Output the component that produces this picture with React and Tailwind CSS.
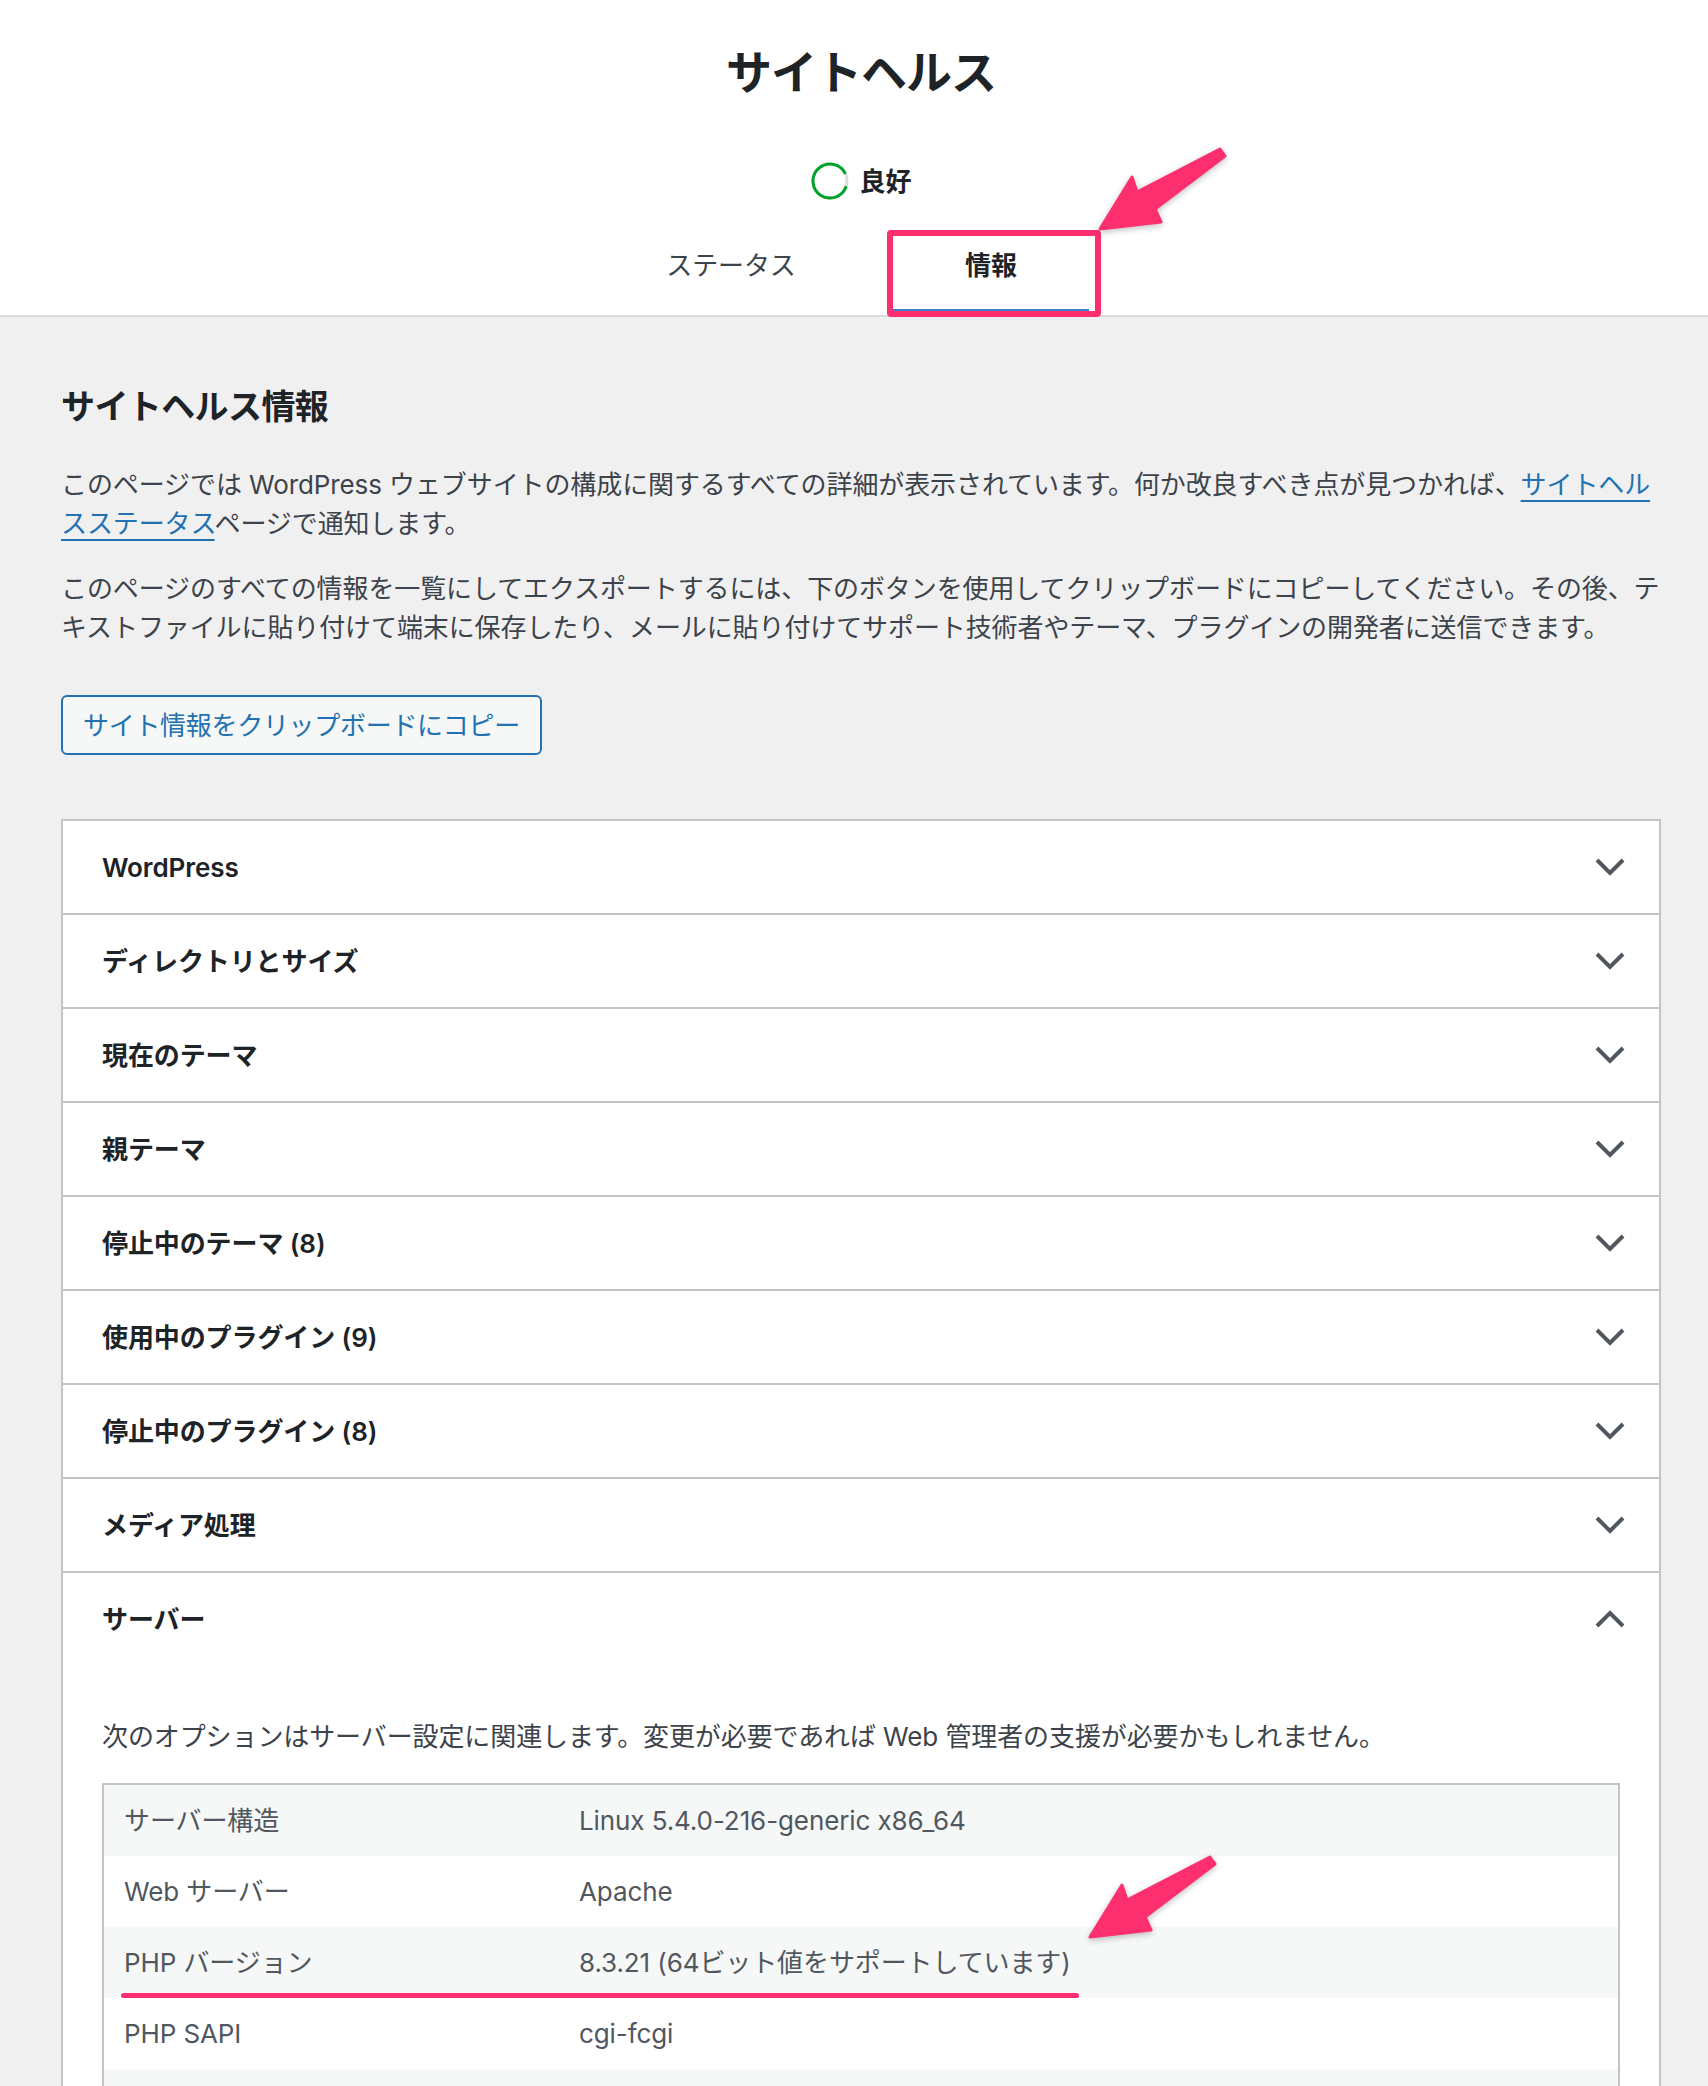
const sections = [
  'WordPress',
  'ディレクトリとサイズ',
  '現在のテーマ',
  '親テーマ',
  '停止中のテーマ (8)',
  '使用中のプラグイン (9)',
  '停止中のプラグイン (8)',
  'メディア処理',
];

// last row only shows its stripe at the bottom edge of the screenshot
const serverInfo = [
  ['サーバー構造', 'Linux 5.4.0-216-generic x86_64'],
  ['Web サーバー', 'Apache'],
  ['PHP バージョン', '8.3.21 (64ビット値をサポートしています)'],
  ['PHP SAPI', 'cgi-fcgi'],
  ['', ''],
];

// chevron drawn like the WP accordion icon (two borders of a rotated square)
const Chevron = ({ up }) => (
  <svg width="30" height="18" viewBox="0 0 30 18" className="shrink-0">
    <polyline
      points={up ? '2,16 15,3 28,16' : '2,2 15,15 28,2'}
      fill="none"
      stroke="#50575e"
      strokeWidth="4"
      strokeLinejoin="miter"
    />
  </svg>
);

const ProgressRing = () => (
  <svg width="38" height="38" viewBox="0 0 38 38">
    <circle cx="19" cy="19" r="17" fill="none" stroke="#dcdcde" strokeWidth="3" />
    <path d="M 35.17 24.25 A 17 17 0 1 1 34.41 11.82" fill="none" stroke="#00a32a" strokeWidth="3" />
  </svg>
);

// pink annotation arrow, tip at (10, 89) of the box
const PinkArrow = ({ className }) => (
  <svg
    width="145"
    height="100"
    viewBox="0 0 145 100"
    className={`absolute drop-shadow-[0_2px_3px_rgba(0,0,0,0.25)] ${className}`}
  >
    <polygon
      points="10,89 42,37 47,52 130,9 135,16 65,69 71,82"
      fill="#fe2f6e"
      stroke="#fe2f6e"
      strokeWidth="3"
      strokeLinejoin="round"
    />
  </svg>
);

export default function App() {
  return (
    <div className="relative h-[2086px] w-[1708px] overflow-hidden bg-[#f0f0f1] font-[Inter,'Noto_Sans_CJK_JP',sans-serif] text-[26px] leading-[39px] tracking-[-0.1px] text-[#3c434a]">
      <div className="w-[1722px]">
        {/* Header */}
        <header className="flex flex-col items-center border-b-2 border-[#dcdcde] bg-white pt-[42px]">
          <h1 className="h-[60px] text-[46px] leading-[60px] font-semibold tracking-[-1px] text-[#1d2327]">サイトヘルス</h1>
          <div className="mt-[59px] flex h-[40px] items-center gap-[11px]">
            <ProgressRing />
            <span className="font-semibold text-[#1d2327]">良好</span>
          </div>
          <nav className="mt-[29px] flex gap-[64px]">
            <div className="h-[85px] w-[196px] pt-[16px] text-center text-[#3c434a]">ステータス</div>
            <div className="h-[85px] w-[196px] pt-[16px] text-center font-semibold text-[#1d2327] shadow-[inset_0_-6px_0_#3582c4]">情報</div>
          </nav>
        </header>

        {/* Body */}
        <main className="px-[61px] pt-[68px]">
          <h2 className="h-[44px] text-[34px] leading-[44px] font-semibold tracking-[-0.6px] text-[#1d2327]">サイトヘルス情報</h2>
          <p className="mt-[36px] whitespace-nowrap">
            このページでは WordPress ウェブサイトの構成に関するすべての詳細が表示されています。何か改良すべき点が見つかれば、
            <a className="text-[#2271b1] underline decoration-2 underline-offset-[6px]">サイトヘル</a>
            <br />
            <a className="text-[#2271b1] underline decoration-2 underline-offset-[6px]">スステータス</a>
            ページで通知します。
          </p>
          <p className="mt-[26px] whitespace-nowrap">
            このページのすべての情報を一覧にしてエクスポートするには、下のボタンを使用してクリップボードにコピーしてください。その後、テ
            <br />
            キストファイルに貼り付けて端末に保存したり、メールに貼り付けてサポート技術者やテーマ、プラグインの開発者に送信できます。
          </p>
          <button className="mt-[48px] flex h-[60px] items-center rounded-[6px] border-2 border-[#2271b1] bg-[#f6f7f7] px-[20px] tracking-[-0.3px] text-[#2271b1]">
            サイト情報をクリップボードにコピー
          </button>

          {/* Accordion */}
          <div className="mt-[64px] border-2 border-[#c3c4c7] bg-white">
            {sections.map((title, i) => (
              <div
                key={title}
                className={`flex items-center justify-between pl-[39px] pr-[34px] ${i > 0 ? 'h-[94px] border-t-2 border-[#c3c4c7]' : 'h-[92px]'}`}
              >
                <span className="font-semibold text-[#1d2327]">{title}</span>
                <Chevron />
              </div>
            ))}
            <div className="border-t-2 border-[#c3c4c7]">
              <div className="flex h-[92px] items-center justify-between pl-[39px] pr-[34px]">
                <span className="font-semibold text-[#1d2327]">サーバー</span>
                <Chevron up />
              </div>
              <div className="px-[39px] pt-[52px]">
                <p className="mb-[27px] whitespace-nowrap">
                  次のオプションはサーバー設定に関連します。変更が必要であれば Web 管理者の支援が必要かもしれません。
                </p>
                <div className="border-2 border-[#c3c4c7]">
                  <table className="w-full border-collapse text-[#50575e]">
                    <tbody>
                      {serverInfo.map(([k, v], i) => (
                        <tr key={i} className={`h-[71px] ${i % 2 === 0 ? 'bg-[#f6f7f7]' : 'bg-white'}`}>
                          <td className="w-[455px] px-[20px] align-middle">{k}</td>
                          <td className="px-[20px] align-middle">{v}</td>
                        </tr>
                      ))}
                    </tbody>
                  </table>
                </div>
              </div>
            </div>
          </div>
        </main>
      </div>

      {/* annotations */}
      <div className="absolute left-[887px] top-[230px] h-[87px] w-[214px] rounded-[4px] border-[6px] border-[#fe2f6e]" />
      <PinkArrow className="left-[1090px] top-[140px]" />
      <PinkArrow className="left-[1080px] top-[1848px]" />
      <div className="absolute left-[121px] top-[1993px] h-[5px] w-[958px] rounded-full bg-[#fe2f6e]" />
    </div>
  );
}
